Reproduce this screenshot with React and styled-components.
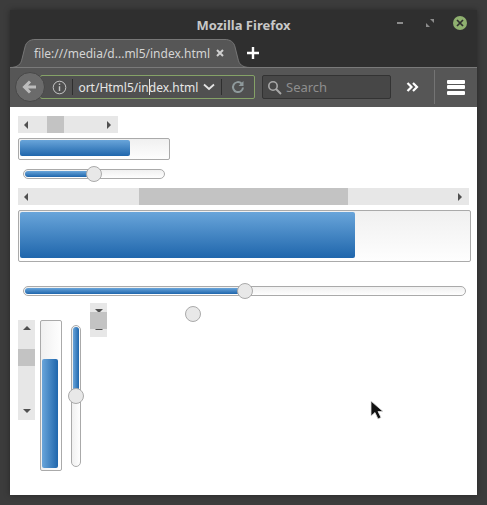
import React from "react";
import styled, { createGlobalStyle } from "styled-components";

const GlobalStyle = createGlobalStyle`
  html, body {
    margin: 0;
    padding: 0;
    width: 487px;
    height: 505px;
    overflow: hidden;
    background: #3c3c3c;
    font-family: "Noto Sans", "Open Sans", sans-serif;
  }
`;

const App = () => {
  return (
    <Desktop>
      <GlobalStyle />
      <Window>
        <TitleBar>
          <Title>Mozilla Firefox</Title>
          <WindowButtons>
            <svg width="10" height="10" viewBox="0 0 10 10">
              <rect x="2" y="4" width="6" height="2" fill="#8c8c8c" />
            </svg>
            <svg width="10" height="10" viewBox="0 0 10 10">
              <path d="M5 1h4v4zM5 9H1V5z" fill="#8c8c8c" />
            </svg>
            <CloseDot>
              <svg width="8" height="8" viewBox="0 0 8 8">
                <path d="M1 1l6 6M7 1l-6 6" stroke="#2e2e2e" strokeWidth="1.7" />
              </svg>
            </CloseDot>
          </WindowButtons>
        </TitleBar>

        <TabStrip>
          <Tab>
            <TabShape width="240" height="29" viewBox="0 0 240 29">
              <path
                d="M0 28.5C8 28.5 11 25 12 20L15 8C16 3 20 .5 25 .5H215C220 .5 224 3 225 8L228 20C229 25 232 28.5 240 28.5V29H0Z"
                fill="#565656"
              />
              <path
                d="M0 28.5C8 28.5 11 25 12 20L15 8C16 3 20 .5 25 .5H215C220 .5 224 3 225 8L228 20C229 25 232 28.5 240 28.5"
                fill="none"
                stroke="#777"
              />
            </TabShape>
            <TabLabel>file:///media/d...ml5/index.html</TabLabel>
            <TabClose width="8" height="8" viewBox="0 0 8 8">
              <path d="M1 1l6 6M7 1l-6 6" stroke="#cfcfcf" strokeWidth="2" />
            </TabClose>
          </Tab>
          <NewTab width="14" height="14" viewBox="0 0 14 14">
            <path d="M7 1v12M1 7h12" stroke="#fff" strokeWidth="2.4" />
          </NewTab>
        </TabStrip>

        <Toolbar>
          <BackButton>
            <svg width="16" height="16" viewBox="0 0 16 16">
              <path
                d="M8 2.5L2.5 8 8 13.5M3 8h11"
                fill="none"
                stroke="#bcbcbc"
                strokeWidth="3"
              />
            </svg>
          </BackButton>
          <UrlBar>
            <svg width="15" height="15" viewBox="0 0 15 15">
              <circle cx="7.5" cy="7.5" r="6.3" fill="none" stroke="#c4c4c4" />
              <path d="M7.5 6.3v4.7M7.5 3.5v1.6" stroke="#c4c4c4" strokeWidth="1.4" />
            </svg>
            <UrlDivider />
            <UrlText>
              <UrlInner>
                port/Html5/in
                <Caret />
                dex.html
              </UrlInner>
            </UrlText>
            <UrlChevron width="12" height="8" viewBox="0 0 12 8">
              <path d="M1 1.5l5 4.5 5-4.5" fill="none" stroke="#e4e4e4" strokeWidth="1.8" />
            </UrlChevron>
            <UrlDivider />
            <Reload width="14" height="14" viewBox="0 0 14 14">
              <path
                d="M12 7.5A5 5 0 1 1 10.5 3.5"
                fill="none"
                stroke="#8f9a9c"
                strokeWidth="2"
              />
              <path d="M12.5 1v5h-5z" fill="#8f9a9c" />
            </Reload>
          </UrlBar>
          <SearchBar>
            <svg width="15" height="15" viewBox="0 0 15 15">
              <circle cx="6" cy="6" r="4.2" fill="none" stroke="#a8a8a8" strokeWidth="1.6" />
              <path d="M9 9l5 5" stroke="#a8a8a8" strokeWidth="2" />
            </svg>
            <SearchText>Search</SearchText>
          </SearchBar>
          <Overflow width="14" height="10" viewBox="0 0 14 10">
            <path
              d="M1.5 1l4 4-4 4M7 1l4 4-4 4"
              fill="none"
              stroke="#fff"
              strokeWidth="2.2"
            />
          </Overflow>
          <ToolbarDivider />
          <Menu>
            <MenuLine />
            <MenuLine />
            <MenuLine />
          </Menu>
        </Toolbar>

        <Content>
          <ScrollH width={100} thumbStart={29} thumbSize={17} />
          <ProgressH width={152} height={22} fill={110} />
          <SliderH width={142} value={71} />
          <ScrollH width={451} thumbStart={121} thumbSize={209} top={9} />
          <ProgressH width={453} height={52} fill={335} top={5} />
          <SliderH width={443} value={222} top={24} />
          <BottomRow>
            <VerticalScroll height={100} thumbStart={29} thumbSize={17} top={17} />
            <ProgressV top={17} />
            <SliderV top={22} />
            <VerticalScroll
              height={34}
              thumbStart={9}
              thumbSize={17}
              left={9}
              swapped
            />
            <LoneThumb />
          </BottomRow>
          <Cursor width="14" height="21" viewBox="0 0 14 21">
            <path
              d="M1 1v15l4-3.5 3 6.5 3-1.5-3-6h5z"
              fill="#111"
              stroke="#ddd"
              strokeWidth="0.8"
            />
          </Cursor>
        </Content>
      </Window>
    </Desktop>
  );
};

const ScrollH = ({ width, thumbStart, thumbSize, top = 0 }) => (
  <HTrack $width={width} $top={top}>
    <ArrowLeft />
    <HThumb style={{ left: thumbStart, width: thumbSize }} />
    <ArrowRight />
  </HTrack>
);

const VerticalScroll = ({ height, thumbStart, thumbSize, top = 0, left = 0, swapped }) => (
  <VTrack $height={height} $top={top} $left={left} $swapped={swapped}>
    <ArrowUp />
    <VThumb style={{ top: thumbStart, height: thumbSize }} />
    <ArrowDown />
  </VTrack>
);

const ProgressH = ({ width, height, fill, top = 5 }) => (
  <ProgressBox $width={width} $height={height} $top={top}>
    <ProgressFill style={{ width: fill }} />
  </ProgressBox>
);

const SliderH = ({ width, value, top = 9 }) => (
  <SliderTrack $width={width} $top={top}>
    <SliderFill style={{ width: value }} />
    <SliderThumb style={{ left: value - 9 }} />
  </SliderTrack>
);

const ProgressV = ({ top }) => (
  <VProgressBox $top={top}>
    <VProgressFill />
  </VProgressBox>
);

const SliderV = ({ top }) => (
  <VSliderTrack $top={top}>
    <VSliderFill />
    <VSliderThumb />
  </VSliderTrack>
);

export default App;

const Desktop = styled.div`
  width: 487px;
  height: 505px;
  padding: 10px;
  box-sizing: border-box;
`;

const Window = styled.div`
  width: 467px;
  height: 485px;
  display: flex;
  flex-direction: column;
  background: #2f2f2f;
  box-shadow: 0 0 6px rgba(0, 0, 0, 0.35);
`;

const TitleBar = styled.div`
  height: 29px;
  flex: none;
  position: relative;
  display: flex;
  align-items: center;
  justify-content: center;
`;

const Title = styled.div`
  font-size: 13px;
  font-weight: 700;
  color: #c8c8c8;
  margin-top: 1px;
`;

const WindowButtons = styled.div`
  position: absolute;
  right: 10px;
  top: 3px;
  display: flex;
  align-items: center;
  gap: 20px;
  height: 20px;
`;

const CloseDot = styled.div`
  width: 14px;
  height: 14px;
  margin-left: -2px;
  border-radius: 50%;
  background: #8fb06f;
  display: flex;
  align-items: center;
  justify-content: center;
`;

const TabStrip = styled.div`
  height: 28px;
  flex: none;
  display: flex;
  align-items: center;
`;

const Tab = styled.div`
  position: relative;
  width: 240px;
  height: 28px;
  display: flex;
  align-items: center;
  padding: 0 0 0 24px;
  box-sizing: border-box;
`;

const TabShape = styled.svg`
  position: absolute;
  left: 0;
  top: 0;
`;

const TabLabel = styled.span`
  position: relative;
  font-size: 12px;
  color: #d4d4d4;
  white-space: nowrap;
  width: 182px;
`;

const TabClose = styled.svg`
  position: relative;
`;

const NewTab = styled.svg`
  position: relative;
  margin-left: -4px;
`;

const Toolbar = styled.div`
  height: 40px;
  flex: none;
  background: #565656;
  border-top: 1px solid #7a7a7a;
  box-sizing: border-box;
  display: flex;
  align-items: center;
  padding: 0 0 1px 5px;
  position: relative;
`;

const BackButton = styled.div`
  width: 30px;
  height: 30px;
  box-sizing: border-box;
  border-radius: 50%;
  background: #6b6b6b;
  border: 1px solid #484848;
  display: flex;
  align-items: center;
  justify-content: center;
  position: relative;
  z-index: 1;
  flex: none;
`;

const UrlBar = styled.div`
  width: 215px;
  height: 24px;
  margin-left: -5px;
  padding-left: 11px;
  box-sizing: border-box;
  flex: none;
  background: #505050;
  border: 1px solid #85a267;
  border-radius: 2px;
  display: flex;
  align-items: center;
  gap: 5px;
`;

const UrlDivider = styled.div`
  width: 1px;
  height: 16px;
  background: #2e2e2e;
  flex: none;
`;

const UrlText = styled.div`
  width: 120px;
  overflow: hidden;
  flex: none;
  font-size: 12px;
  color: #e6e6e6;
  white-space: nowrap;
`;

const UrlInner = styled.span`
  display: inline-flex;
  align-items: center;
  margin-left: -7px;
`;

const UrlChevron = styled.svg`
  margin-right: 1px;
  flex: none;
`;

const Reload = styled.svg`
  margin-left: 4px;
  flex: none;
`;

const Caret = styled.span`
  display: inline-block;
  width: 1px;
  height: 16px;
  margin-right: -1px;
  background: #e8e8e8;
`;

const SearchBar = styled.div`
  width: 129px;
  height: 24px;
  margin-left: 7px;
  padding-left: 4px;
  box-sizing: border-box;
  flex: none;
  background: #474747;
  border: 1px solid #333;
  border-radius: 2px;
  display: flex;
  align-items: center;
  gap: 4px;
`;

const SearchText = styled.span`
  font-size: 13px;
  color: #8e8e8e;
`;

const Overflow = styled.svg`
  margin-left: 15px;
  flex: none;
`;

const ToolbarDivider = styled.div`
  width: 1px;
  height: 34px;
  margin-left: 14px;
  background: #747474;
  flex: none;
`;

const Menu = styled.div`
  margin-left: 12px;
  width: 18px;
  display: flex;
  flex-direction: column;
  gap: 1.5px;
`;

const MenuLine = styled.div`
  height: 4px;
  border-radius: 1px;
  background: #fff;
`;

const Content = styled.div`
  flex: 1;
  position: relative;
  background: #fff;
  padding: 9px 0 0 8px;
  display: flex;
  flex-direction: column;
  align-items: flex-start;
`;

const HTrack = styled.div`
  position: relative;
  flex: none;
  width: ${(p) => p.$width}px;
  height: 17px;
  margin-top: ${(p) => p.$top}px;
  background: #e7e7e7;
  display: flex;
  align-items: center;
  justify-content: space-between;
  padding: 0 7px 0 6px;
  box-sizing: border-box;
`;

const HThumb = styled.div`
  position: absolute;
  top: 0;
  bottom: 0;
  background: #c3c3c3;
`;

const ArrowLeft = styled.div`
  border-style: solid;
  border-width: 4px 4px 4px 0;
  border-color: transparent #505050 transparent transparent;
`;

const ArrowRight = styled.div`
  border-style: solid;
  border-width: 4px 0 4px 4px;
  border-color: transparent transparent transparent #505050;
`;

const VTrack = styled.div`
  position: relative;
  flex: none;
  width: 17px;
  height: ${(p) => p.$height}px;
  margin-top: ${(p) => p.$top}px;
  margin-left: ${(p) => p.$left}px;
  background: #e7e7e7;
  display: flex;
  flex-direction: ${(p) => (p.$swapped ? "column-reverse" : "column")};
  align-items: center;
  justify-content: space-between;
  padding: 6px 0 7px;
  box-sizing: border-box;
`;

const VThumb = styled.div`
  position: absolute;
  left: 0;
  right: 0;
  background: #c3c3c3;
`;

const ArrowUp = styled.div`
  border-style: solid;
  border-width: 0 4px 4px 4px;
  border-color: transparent transparent #505050 transparent;
`;

const ArrowDown = styled.div`
  border-style: solid;
  border-width: 4px 4px 0 4px;
  border-color: #505050 transparent transparent transparent;
`;

const ProgressBox = styled.div`
  flex: none;
  width: ${(p) => p.$width}px;
  height: ${(p) => p.$height}px;
  margin-top: ${(p) => p.$top}px;
  box-sizing: border-box;
  border: 1px solid #aaa;
  border-radius: 2px;
  padding: 1px 1px 3px;
  background: linear-gradient(to bottom, #f0f0f0, #fefefe);
`;

const ProgressFill = styled.div`
  height: 100%;
  border-radius: 2px;
  background: linear-gradient(to bottom, #69a5da, #1f66ac);
`;

const SliderTrack = styled.div`
  position: relative;
  flex: none;
  width: ${(p) => p.$width}px;
  height: 10px;
  margin-top: ${(p) => p.$top}px;
  margin-left: 5px;
  box-sizing: border-box;
  border: 1px solid #aaa;
  border-radius: 5px;
  padding: 1px;
  background: linear-gradient(to bottom, #f0f0f0, #fefefe);
`;

const SliderFill = styled.div`
  height: 100%;
  border-radius: 3px 0 0 3px;
  background: linear-gradient(to bottom, #69a5da, #1f66ac);
`;

const SliderThumb = styled.div`
  position: absolute;
  top: -4px;
  width: 16px;
  height: 16px;
  box-sizing: border-box;
  border: 1px solid #aaa;
  border-radius: 50%;
  background: #e8e8e8;
`;

const BottomRow = styled.div`
  display: flex;
  align-items: flex-start;
  margin-top: 7px;
`;

const VProgressBox = styled.div`
  flex: none;
  width: 22px;
  height: 151px;
  margin-left: 5px;
  margin-top: ${(p) => p.$top}px;
  box-sizing: border-box;
  border: 1px solid #aaa;
  border-radius: 2px;
  padding: 38px 3px 2px 1px;
  background: linear-gradient(to right, #f0f0f0, #fefefe);
`;

const VProgressFill = styled.div`
  height: 100%;
  border-radius: 2px;
  background: linear-gradient(to right, #69a5da, #1f66ac);
`;

const VSliderTrack = styled.div`
  position: relative;
  flex: none;
  width: 10px;
  height: 142px;
  margin-left: 9px;
  margin-top: ${(p) => p.$top}px;
  box-sizing: border-box;
  border: 1px solid #aaa;
  border-radius: 5px;
  padding: 1px;
  background: linear-gradient(to right, #f0f0f0, #fefefe);
`;

const VSliderFill = styled.div`
  height: 63px;
  border-radius: 3px 3px 0 0;
  background: linear-gradient(to right, #69a5da, #1f66ac);
`;

const VSliderThumb = styled.div`
  position: absolute;
  top: 62px;
  left: -4px;
  width: 16px;
  height: 16px;
  box-sizing: border-box;
  border: 1px solid #aaa;
  border-radius: 50%;
  background: #e8e8e8;
`;

const LoneThumb = styled.div`
  flex: none;
  width: 16px;
  height: 16px;
  margin-left: 78px;
  margin-top: 3px;
  box-sizing: border-box;
  border: 1px solid #aaa;
  border-radius: 50%;
  background: #e8e8e8;
`;

const Cursor = styled.svg`
  position: absolute;
  left: 360px;
  top: 293px;
`;
